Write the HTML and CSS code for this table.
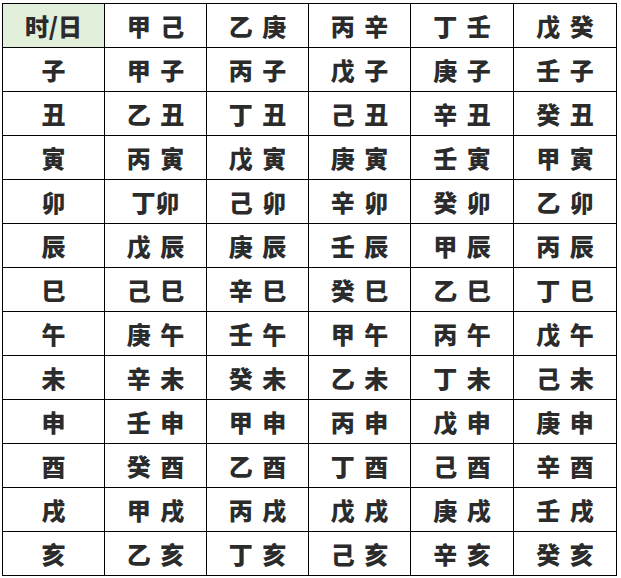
FILE: index.html
```html
<!DOCTYPE html>
<html lang="zh-CN">
<head>
<meta charset="utf-8">
<title>时辰天干表</title>
<link rel="stylesheet" href="styles.css">
</head>
<body>
<div class="table">
  <div class="cell head">时/日</div><div class="cell">甲 己</div><div class="cell">乙 庚</div><div class="cell">丙 辛</div><div class="cell">丁 壬</div><div class="cell">戊 癸</div>
  <div class="cell">子</div><div class="cell">甲 子</div><div class="cell">丙 子</div><div class="cell">戊 子</div><div class="cell">庚 子</div><div class="cell">壬 子</div>
  <div class="cell">丑</div><div class="cell">乙 丑</div><div class="cell">丁 丑</div><div class="cell">己 丑</div><div class="cell">辛 丑</div><div class="cell">癸 丑</div>
  <div class="cell">寅</div><div class="cell">丙 寅</div><div class="cell">戊 寅</div><div class="cell">庚 寅</div><div class="cell">壬 寅</div><div class="cell">甲 寅</div>
  <div class="cell">卯</div><div class="cell">丁卯</div><div class="cell">己 卯</div><div class="cell">辛 卯</div><div class="cell">癸 卯</div><div class="cell">乙 卯</div>
  <div class="cell">辰</div><div class="cell">戊 辰</div><div class="cell">庚 辰</div><div class="cell">壬 辰</div><div class="cell">甲 辰</div><div class="cell">丙 辰</div>
  <div class="cell">巳</div><div class="cell">己 巳</div><div class="cell">辛 巳</div><div class="cell">癸 巳</div><div class="cell">乙 巳</div><div class="cell">丁 巳</div>
  <div class="cell">午</div><div class="cell">庚 午</div><div class="cell">壬 午</div><div class="cell">甲 午</div><div class="cell">丙 午</div><div class="cell">戊 午</div>
  <div class="cell">未</div><div class="cell">辛 未</div><div class="cell">癸 未</div><div class="cell">乙 未</div><div class="cell">丁 未</div><div class="cell">己 未</div>
  <div class="cell">申</div><div class="cell">壬 申</div><div class="cell">甲 申</div><div class="cell">丙 申</div><div class="cell">戊 申</div><div class="cell">庚 申</div>
  <div class="cell">酉</div><div class="cell">癸 酉</div><div class="cell">乙 酉</div><div class="cell">丁 酉</div><div class="cell">己 酉</div><div class="cell">辛 酉</div>
  <div class="cell">戌</div><div class="cell">甲 戌</div><div class="cell">丙 戌</div><div class="cell">戊 戌</div><div class="cell">庚 戌</div><div class="cell">壬 戌</div>
  <div class="cell">亥</div><div class="cell">乙 亥</div><div class="cell">丁 亥</div><div class="cell">己 亥</div><div class="cell">辛 亥</div><div class="cell">癸 亥</div>
</div>
</body>
</html>
```
FILE: styles.css
```css
html, body {
  margin: 0;
  padding: 0;
  background: #ffffff;
}
.table {
  display: grid;
  grid-template-columns: 101px 101px 101px 101px 102px 102px;
  grid-auto-rows: 43px;
  gap: 1px;
  padding: 1px;
  background: #000000;
  width: max-content;
  margin: 3px 0 0 2px;
}
.cell {
  background: #ffffff;
  display: flex;
  align-items: center;
  justify-content: center;
  font-family: "Noto Sans CJK SC", "Noto Sans", sans-serif;
  font-weight: 900;
  font-size: 24px;
  color: #2b2b2b;
  word-spacing: 4px;
  white-space: pre;
}
.head {
  background: #e2efda;
}
```
